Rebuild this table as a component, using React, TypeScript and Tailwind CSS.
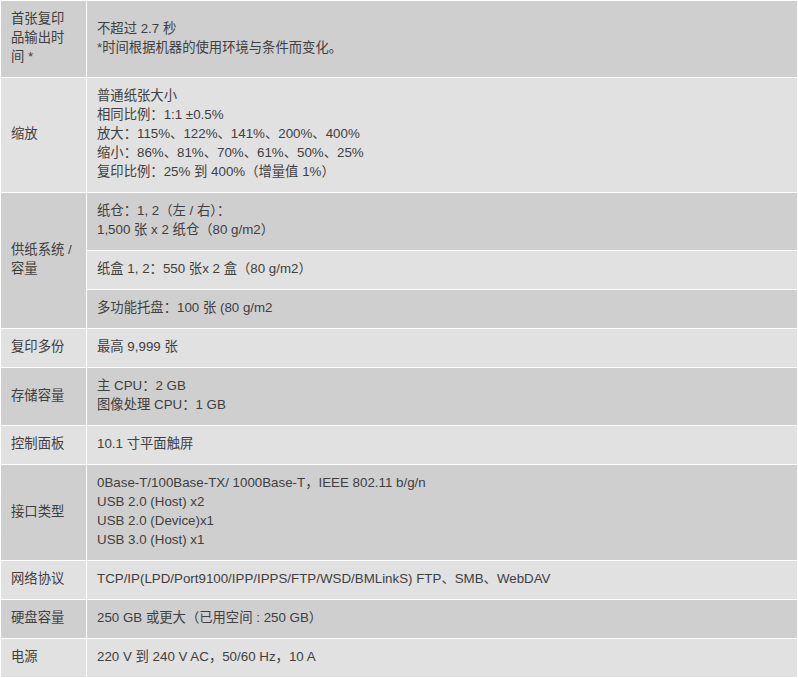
const font = { fontFamily: '"Liberation Sans", Arial, "Noto Sans CJK SC", sans-serif' };

type Row = { label: string; values: string[][] };

const rows: Row[] = [
  {
    label: "首张复印品输出时间 *",
    values: [["不超过 2.7 秒", "*时间根据机器的使用环境与条件而变化。"]],
  },
  {
    label: "缩放",
    values: [
      [
        "普通纸张大小",
        "相同比例：1:1 ±0.5%",
        "放大：115%、122%、141%、200%、400%",
        "缩小：86%、81%、70%、61%、50%、25%",
        "复印比例：25% 到 400%（增量值 1%）",
      ],
    ],
  },
  {
    label: "供纸系统 / 容量",
    values: [
      ["纸仓：1, 2（左 / 右）：", "1,500 张 x 2 纸仓（80 g/m2）"],
      ["纸盒 1, 2：550 张x 2 盒（80 g/m2）"],
      ["多功能托盘：100 张 (80 g/m2"],
    ],
  },
  { label: "复印多份", values: [["最高 9,999 张"]] },
  { label: "存储容量", values: [["主 CPU：2 GB", "图像处理 CPU：1 GB"]] },
  { label: "控制面板", values: [["10.1 寸平面触屏"]] },
  {
    label: "接口类型",
    values: [
      [
        "0Base-T/100Base-TX/ 1000Base-T，IEEE 802.11 b/g/n",
        "USB 2.0 (Host) x2",
        "USB 2.0 (Device)x1",
        "USB 3.0 (Host) x1",
      ],
    ],
  },
  {
    label: "网络协议",
    values: [["TCP/IP(LPD/Port9100/IPP/IPPS/FTP/WSD/BMLinkS) FTP、SMB、WebDAV"]],
  },
  { label: "硬盘容量", values: [["250 GB 或更大（已用空间 : 250 GB）"]] },
  { label: "电源", values: [["220 V 到 240 V AC，50/60 Hz，10 A"]] },
];

export default function App() {
  return (
    <div
      className="w-[798px] bg-white flex flex-col gap-px pt-px pl-px pr-px text-[13.33px] leading-[19px] text-[#404040]"
      style={font}
    >
      {rows.map((row, i) => {
        const dark = i % 2 === 0;
        return (
          <div key={row.label} className="flex gap-px">
            <div
              className={`w-[85px] shrink-0 flex items-center pl-[10px] pr-[12px] pt-[8px] pb-[11px] ${
                dark ? "bg-[#cfcfcf]" : "bg-[#e1e1e1]"
              }`}
            >
              <span>{row.label}</span>
            </div>
            <div className="flex-1 flex flex-col gap-px">
              {row.values.map((lines, j) => {
                const subDark = row.values.length > 1 ? j % 2 === 0 : dark;
                return (
                  <div
                    key={j}
                    className={`flex-1 flex flex-col justify-center px-[10px] pt-[8px] pb-[11px] ${
                      subDark ? "bg-[#cfcfcf]" : "bg-[#e1e1e1]"
                    }`}
                  >
                    {lines.map((line) => (
                      <div key={line}>{line}</div>
                    ))}
                  </div>
                );
              })}
            </div>
          </div>
        );
      })}
    </div>
  );
}
